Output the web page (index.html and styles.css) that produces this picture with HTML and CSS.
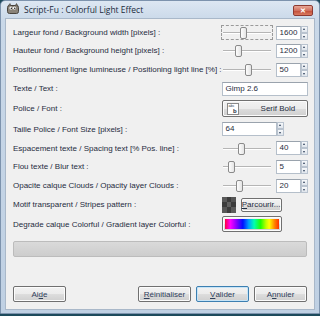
FILE: index.html
```html
<!DOCTYPE html>
<html lang="fr">
<head>
    <meta charset="UTF-8">
    <title>Script-Fu : Colorful Light Effect</title>
    <link rel="stylesheet" href="styles.css">
</head>
<body>
    <div class="window">
        <div class="titlebar">
            <svg class="app-icon" width="12" height="12" viewBox="0 0 12 12">
                <rect x="0.5" y="2.5" width="11" height="8" rx="2" fill="#8a8378" stroke="#4a453e"/>
                <circle cx="4" cy="5" r="1.6" fill="#fff"/>
                <circle cx="7.5" cy="5" r="1.6" fill="#fff"/>
                <circle cx="4.3" cy="5.2" r="0.7" fill="#000"/>
                <circle cx="7.8" cy="5.2" r="0.7" fill="#000"/>
                <path d="M1 3 L3 0.5 L4 3 M8 3 L9.5 0.5 L11 3" fill="#6e685e" stroke="#4a453e" stroke-width="0.6"/>
            </svg>
            <span class="title">Script-Fu : Colorful Light Effect</span>
            <div class="close"><span>&#x2715;</span></div>
        </div>

        <div class="client">
            <div class="form">
                <div class="label">Largeur fond / Background width [pixels] :</div>
                <div class="ctrl">
                    <div class="slider focused"><div class="track"></div><div class="thumb" style="left: 18px"></div></div>
                    <div class="spin"><div class="spin-box">1600</div><div class="arrows"><i class="up"></i><i class="down"></i></div></div>
                </div>

                <div class="label">Hauteur fond / Background height [pixels] :</div>
                <div class="ctrl">
                    <div class="slider"><div class="track"></div><div class="thumb" style="left: 13px"></div></div>
                    <div class="spin"><div class="spin-box">1200</div><div class="arrows"><i class="up"></i><i class="down"></i></div></div>
                </div>

                <div class="label">Positionnement ligne lumineuse / Positioning light line [%] :</div>
                <div class="ctrl">
                    <div class="slider"><div class="track"></div><div class="thumb" style="left: 23px"></div></div>
                    <div class="spin"><div class="spin-box">50</div><div class="arrows"><i class="up"></i><i class="down"></i></div></div>
                </div>

                <div class="label">Texte / Text :</div>
                <div class="ctrl">
                    <div class="entry">Gimp 2.6</div>
                </div>

                <div class="label">Police / Font :</div>
                <div class="ctrl">
                    <div class="button font-button">
                        <span class="font-icon"><span class="abc">a<sup>b</sup><sup>c</sup></span><b>b</b></span>
                        <span class="font-name">Serif Bold</span>
                    </div>
                </div>

                <div class="label">Taille Police / Font Size [pixels] :</div>
                <div class="ctrl">
                    <div class="spin wide"><div class="spin-box">64</div><div class="arrows"><i class="up"></i><i class="down"></i></div></div>
                </div>

                <div class="label">Espacement texte / Spacing text [% Pos. line] :</div>
                <div class="ctrl">
                    <div class="slider"><div class="track"></div><div class="thumb" style="left: 16px"></div></div>
                    <div class="spin"><div class="spin-box">40</div><div class="arrows"><i class="up"></i><i class="down"></i></div></div>
                </div>

                <div class="label">Flou texte / Blur text :</div>
                <div class="ctrl">
                    <div class="slider"><div class="track"></div><div class="thumb" style="left: 6px"></div></div>
                    <div class="spin"><div class="spin-box">5</div><div class="arrows"><i class="up"></i><i class="down"></i></div></div>
                </div>

                <div class="label">Opacite calque Clouds / Opacity layer Clouds :</div>
                <div class="ctrl">
                    <div class="slider"><div class="track"></div><div class="thumb" style="left: 14px"></div></div>
                    <div class="spin"><div class="spin-box">20</div><div class="arrows"><i class="up"></i><i class="down"></i></div></div>
                </div>

                <div class="label">Motif transparent / Stripes pattern :</div>
                <div class="ctrl">
                    <svg class="swatch" width="14" height="16" viewBox="0 0 14 16">
                        <rect width="14" height="16" fill="#3c3c3c"/>
                        <rect x="0" y="0" width="5" height="5" fill="#5a5a5a"/>
                        <rect x="9" y="0" width="5" height="5" fill="#555"/>
                        <rect x="5" y="5" width="4" height="5" fill="#626262"/>
                        <rect x="0" y="10" width="5" height="6" fill="#575757"/>
                        <rect x="9" y="10" width="5" height="6" fill="#5c5c5c"/>
                    </svg>
                    <div class="button browse"><u>P</u>arcourir...</div>
                </div>

                <div class="label">Degrade calque Colorful / Gradient layer Colorful :</div>
                <div class="ctrl">
                    <div class="button gradient-button"><div class="gradient"></div></div>
                </div>
            </div>

            <div class="progress"></div>

            <div class="actions">
                <div class="button action">Ai<u>d</u>e</div>
                <div class="spacer"></div>
                <div class="button action"><u>R</u>éinitialiser</div>
                <div class="button action default"><u>V</u>alider</div>
                <div class="button action">A<u>n</u>nuler</div>
            </div>
        </div>
    </div>
</body>
</html>
```

FILE: styles.css
```css
html, body {
    margin: 0;
    padding: 0;
    background: #1d4a5c;
}
body {
    font-family: "Liberation Sans", Arial, sans-serif;
    font-size: 8px;
    color: #1f2c40;
}
.window {
    width: 320px;
    height: 314px;
    box-sizing: border-box;
    background: linear-gradient(#dde7f2, #c9d8e8 20px, #bfd0e3);
    border: 1px solid #7d93ad;
    border-radius: 5px 5px 0 0;
    display: flex;
    flex-direction: column;
}
.titlebar {
    height: 16px;
    display: flex;
    align-items: center;
    padding: 0 6px 0 6px;
}
.app-icon {
    margin-right: 5px;
}
.title {
    font-family: "Open Sans", sans-serif;
    font-size: 8.5px;
    color: #1b2a3c;
    flex: 1;
}
.close {
    width: 18px;
    height: 9px;
    border: 1px solid #8d3a32;
    border-radius: 2px;
    background: linear-gradient(#e8a797, #d0705e 50%, #c04a36 51%, #d97a5f);
    color: #fff;
    font-size: 7px;
    font-weight: bold;
    display: flex;
    align-items: center;
    justify-content: center;
    margin-top: 3px;
}
.client {
    margin: 1px 4px 3px 4px;
    flex: 1;
    background: #f0f0f0;
    border: 1px solid #a9b8c9;
    padding: 5px 7px 0 7px;
}
.form {
    display: grid;
    grid-template-columns: 1fr 86px;
    grid-template-rows: 17px 19px 19px 19px 21px 20px 18px 19px 19px 19px 20px;
}
.label {
    display: flex;
    align-items: center;
    white-space: nowrap;
    overflow: visible;
}
.ctrl {
    display: flex;
    align-items: center;
}
.slider {
    position: relative;
    width: 50px;
    height: 13px;
    margin-right: 4px;
    box-sizing: border-box;
}
.slider.focused {
    outline: 1px dashed #9a9a9a;
}
.track {
    position: absolute;
    left: 1px;
    right: 1px;
    top: 6px;
    height: 1px;
    background: #b5b5b5;
    border-bottom: 1px solid #fff;
}
.thumb {
    position: absolute;
    top: 1px;
    width: 5px;
    height: 10px;
    border: 1px solid #8a8a8a;
    border-radius: 2px;
    background: linear-gradient(to right, #fdfdfd, #e4e4e4);
}
.spin {
    display: flex;
    height: 14px;
}
.spin-box {
    width: 25px;
    box-sizing: border-box;
    background: #fff;
    border: 1px solid #b5bfca;
    border-top-color: #9aa3ad;
    padding-left: 3px;
    line-height: 12px;
}
.spin.wide .spin-box {
    width: 55px;
}
.arrows {
    width: 7px;
    display: flex;
    flex-direction: column;
}
.arrows i {
    flex: 1;
    box-sizing: border-box;
    border: 1px solid #b9c3cf;
    background: linear-gradient(#f7f9fb, #dfe5ec);
    position: relative;
}
.arrows i::after {
    content: "";
    position: absolute;
    left: 1px;
    border-left: 1.5px solid transparent;
    border-right: 1.5px solid transparent;
}
.arrows .up::after {
    top: 1px;
    border-bottom: 2px solid #2c3e58;
}
.arrows .down::after {
    top: 2px;
    border-top: 2px solid #2c3e58;
}
.entry {
    width: 86px;
    height: 14px;
    box-sizing: border-box;
    background: #fff;
    border: 1px solid #b5bfca;
    border-top-color: #9aa3ad;
    padding-left: 3px;
    line-height: 12px;
}
.button {
    box-sizing: border-box;
    border: 1px solid #707070;
    border-radius: 2px;
    background: linear-gradient(#f2f2f2, #ebebeb 50%, #dddddd 51%, #cfcfcf);
    box-shadow: inset 0 0 0 1px #fcfcfc;
    display: flex;
    align-items: center;
    justify-content: center;
}
.font-button {
    width: 86px;
    height: 17px;
    justify-content: flex-start;
    padding-left: 4px;
}
.font-icon {
    width: 10px;
    height: 10px;
    background: #fff;
    border: 1px solid #8a8a8a;
    position: relative;
    font-size: 4px;
    line-height: 4px;
    overflow: hidden;
}
.font-icon .abc {
    position: absolute;
    left: 1px;
    top: 0;
}
.font-icon sup {
    vertical-align: baseline;
}
.font-icon b {
    position: absolute;
    right: 1px;
    bottom: 0;
    font-size: 6px;
    line-height: 6px;
}
.font-name {
    margin-left: 22px;
}
.swatch {
    margin-right: 5px;
}
.browse {
    width: 41px;
    height: 14px;
}
.gradient-button {
    width: 60px;
    height: 16px;
    padding: 2px;
}
.gradient {
    width: 100%;
    height: 100%;
    background: linear-gradient(to right, #ff0040, #ff00ff 10%, #8000ff 22%, #0010ff 33%, #00a0ff 44%, #00ffb0 54%, #20ff00 66%, #c0ff00 76%, #ffff00 82%, #ff8000 92%, #ff3000);
}
.progress {
    margin-top: 7px;
    height: 16px;
    box-sizing: border-box;
    border: 1px solid #bcbcbc;
    border-radius: 2px;
    background: linear-gradient(#dadada, #cdcdcd);
}
.actions {
    display: flex;
    margin-top: 29px;
    gap: 5px;
}
.spacer {
    flex: 1;
}
.action {
    width: 53px;
    height: 16px;
    color: #30405a;
}
.action.default {
    border-color: #3c7fb1;
    box-shadow: inset 0 0 0 1px #c6e4f7;
}
```
